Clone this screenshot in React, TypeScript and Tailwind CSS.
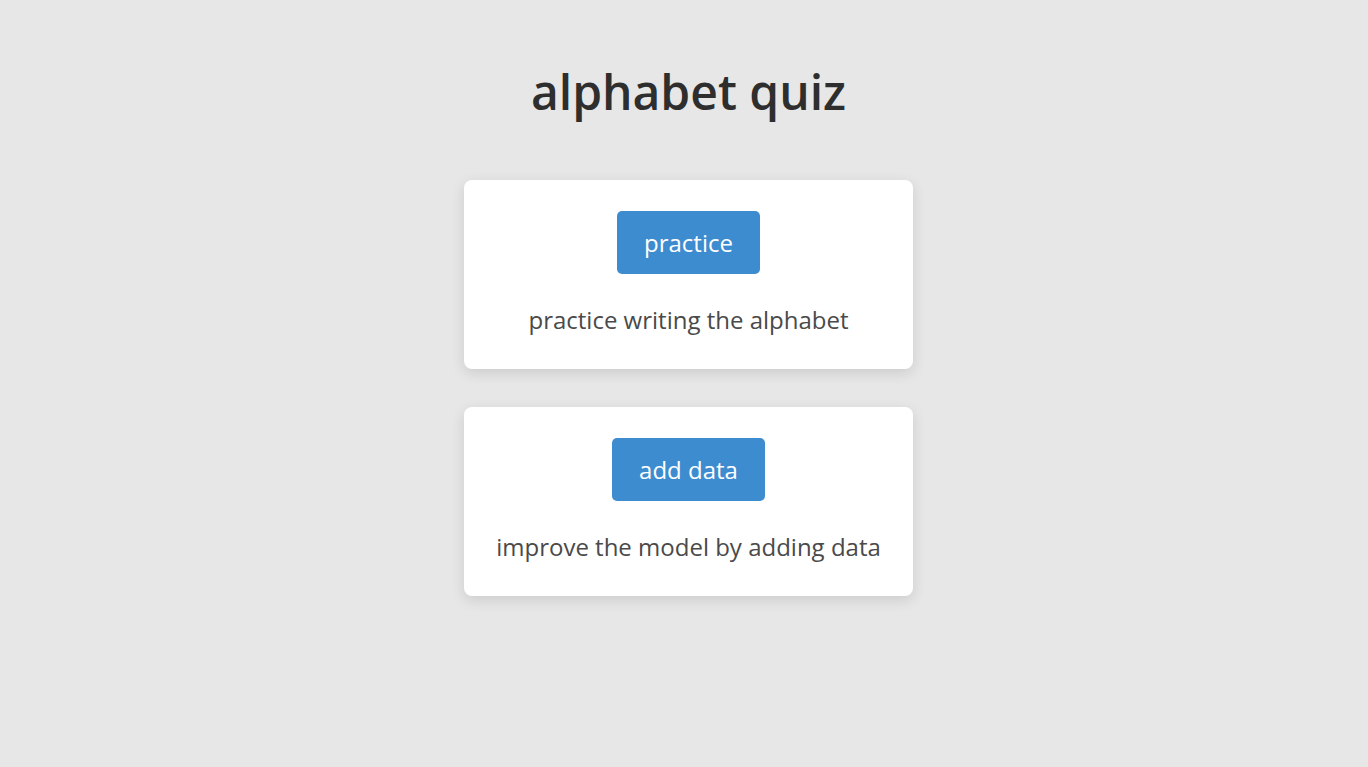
import React from "react";

const font = { fontFamily: '"Open Sans", "Noto Sans", sans-serif' };

function Card({ label, desc }: { label: string; desc: string }) {
  return (
    <div className="w-[449px] h-[189px] bg-white rounded-[8px] shadow-[0_4px_14px_rgba(0,0,0,0.12)] flex flex-col items-center pt-[31px]">
      <button className="h-[63px] px-[27px] bg-[#3d8ccf] text-white rounded-[5px] text-[24px] leading-none">
        {label}
      </button>
      <p className="mt-[34px] text-[24px] leading-none text-[#4a4a4a]">{desc}</p>
    </div>
  );
}

export default function App() {
  return (
    <div className="min-h-[767px] w-full bg-[#e7e7e7] flex flex-col items-center pl-[9px]" style={font}>
      <h1 className="mt-[62px] text-[48px] leading-[60px] font-semibold text-[#2e2e2e]">alphabet quiz</h1>
      <div className="mt-[58px] flex flex-col gap-[38px]">
        <Card label="practice" desc="practice writing the alphabet" />
        <Card label="add data" desc="improve the model by adding data" />
      </div>
    </div>
  );
}
